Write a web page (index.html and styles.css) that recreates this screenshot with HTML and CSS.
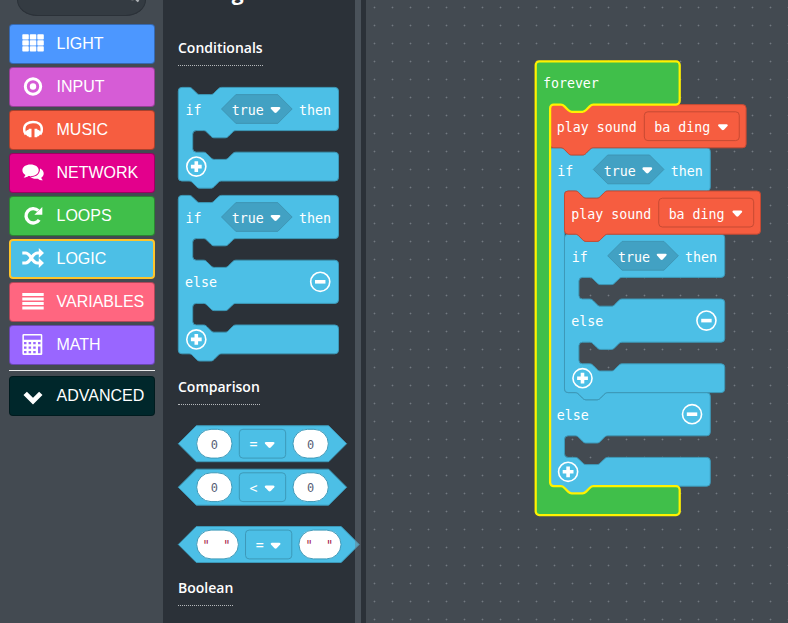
FILE: index.html
```html
<!DOCTYPE html>
<html lang="en">
<head>
<meta charset="utf-8">
<title>Block editor</title>
<link rel="stylesheet" href="styles.css">
</head>
<body>
<svg class="defs" width="0" height="0" aria-hidden="true">
  <defs>
    <path id="caret" d="M1.2 0H9.8Q11.8 .4 10.6 2L6.7 6.3Q5.5 7.4 4.3 6.3L.4 2Q-.8 .4 1.2 0Z"/>
    <g id="plus"><circle r="10.6" fill="none" stroke="#fff" stroke-width="1.8"/><path d="M-6 0H6M0-6V6" stroke="#fff" stroke-width="4"/></g>
    <g id="minus"><circle r="10.6" fill="none" stroke="#fff" stroke-width="1.8"/><path d="M-5.8 0H5.8" stroke="#fff" stroke-width="4"/></g>
    <g id="cond">
      <text x="8" y="31" textLength="17.800" lengthAdjust="spacingAndGlyphs">if</text>
      <path class="hex" d="M48 24L64 8H110.500L126.500 24L110.500 40H64Z"/>
      <text x="59.500" y="31" textLength="35.600" lengthAdjust="spacingAndGlyphs">true</text>
      <use href="#caret" x="102.500" y="21.700" fill="#fff"/>
      <text x="134" y="31" textLength="35.600" lengthAdjust="spacingAndGlyphs">then</text>
    </g>
    <g id="play">
      <path class="music" d="M0 4a4 4 0 0 1 4-4H12c2 0 3 1 4 2l4 4c1 1 2 2 4 2h12c2 0 3-1 4-2l4-4c1-1 2-2 4-2H213.800a4 4 0 0 1 4 4V44a4 4 0 0 1-4 4H48c-2 0-3 1-4 2l-4 4c-1 1-2 2-4 2h-12c-2 0-3-1-4-2l-4-4c-1-1-2-2-4-2H4a4 4 0 0 1-4-4Z"/>
      <text x="7.500" y="31" textLength="88.900" lengthAdjust="spacingAndGlyphs">play sound</text>
      <rect class="music" x="104.700" y="8" width="105.500" height="32" rx="4"/>
      <text x="115.700" y="31" textLength="62.200" lengthAdjust="spacingAndGlyphs">ba ding</text>
      <use href="#caret" x="186.500" y="21.700" fill="#fff"/>
    </g>
    <g id="ifelse">
      <path class="logic" d="M0 4a4 4 0 0 1 4-4H12c2 0 3 1 4 2l4 4c1 1 2 2 4 2h12c2 0 3-1 4-2l4-4c1-1 2-2 4-2H174a4 4 0 0 1 4 4V44a4 4 0 0 1-4 4H64c-2 0-3 1-4 2l-4 4c-1 1-2 2-4 2h-12c-2 0-3-1-4-2l-4-4c-1-1-2-2-4-2h-8a4 4 0 0 0-4 4v16a4 4 0 0 0 4 4h8c2 0 3 1 4 2l4 4c1 1 2 2 4 2h12c2 0 3-1 4-2l4-4c1-1 2-2 4-2H174a4 4 0 0 1 4 4v40a4 4 0 0 1-4 4H64c-2 0-3 1-4 2l-4 4c-1 1-2 2-4 2h-12c-2 0-3-1-4-2l-4-4c-1-1-2-2-4-2h-8a4 4 0 0 0-4 4v16a4 4 0 0 0 4 4h8c2 0 3 1 4 2l4 4c1 1 2 2 4 2h12c2 0 3-1 4-2l4-4c1-1 2-2 4-2H174a4 4 0 0 1 4 4v24a4 4 0 0 1-4 4H48c-2 0-3 1-4 2l-4 4c-1 1-2 2-4 2h-12c-2 0-3-1-4-2l-4-4c-1-1-2-2-4-2H4a4 4 0 0 1-4-4Z"/>
      <use href="#cond"/>
      <text x="7.500" y="102" textLength="35.600" lengthAdjust="spacingAndGlyphs">else</text>
      <use href="#minus" x="157.700" y="96"/>
      <use href="#plus" x="20" y="160"/>
    </g>
    <g id="compare">
      <path class="logic" d="M0 20L20 0H167L187 20L167 40H20Z"/>
      <rect class="value" x="20.400" y="4" width="39.300" height="32" rx="16"/>
      <rect class="logic" x="67.800" y="4" width="51.500" height="32" rx="4"/>
      <rect class="value" x="127.400" y="4" width="39.300" height="32" rx="16"/>
      <text class="number" x="36" y="25.500" textLength="8" lengthAdjust="spacingAndGlyphs">0</text>
      <use href="#caret" x="96" y="18" fill="#fff"/>
      <text class="number" x="143" y="25.500" textLength="8" lengthAdjust="spacingAndGlyphs">0</text>
    </g>
  </defs>
</svg>
<div class="editor">
  <nav class="toolbox">
    <div class="search"><svg width="12" height="12" viewBox="0 0 12 12"><circle cx="4.500" cy="4.500" r="3.500"/><path d="M6.500 6.500L10.500 10.500"/></svg></div>
    <div class="categories">
      <div class="category light"><svg viewBox="0 0 24 24"><path d="M2.100 4.100h4.900v3.600H2.100zM9.600 4.100h4.900v3.600h-4.900zM17.100 4.100h4.900v3.600h-4.900zM2.100 10.100h4.900v3.600H2.100zM9.600 10.100h4.900v3.600h-4.900zM17.100 10.100h4.900v3.600h-4.900zM2.100 16.100h4.900v3.600H2.100zM9.600 16.100h4.900v3.600h-4.900zM17.100 16.100h4.900v3.600h-4.900z" fill="#fff" stroke="#fff" stroke-width="1.600" stroke-linejoin="round"/></svg><span>LIGHT</span></div>
      <div class="category input"><svg viewBox="0 0 24 24"><circle cx="12" cy="12.500" r="7.700" fill="none" stroke="#fff" stroke-width="3"/><circle cx="12" cy="12.500" r="3.200" fill="#fff"/></svg><span>INPUT</span></div>
      <div class="category music-cat"><svg viewBox="0 0 24 24"><path d="M4.800 17.500Q2.900 15 3.200 12C3.200 7.400 7.200 4.900 12 4.900s8.800 2.500 8.800 7.100Q21.100 15 19.200 17.500" fill="none" stroke="#fff" stroke-width="2.500"/><path d="M4.500 15.500q.3-2.500 3.300-3v-.8h2.700v8.600H7.800v-.8q-3-.3-3.300-4zM19.500 15.500q-.3-2.500-3.300-3v-.8h-2.700v8.600h2.700v-.8q3-.3 3.300-4z" fill="#fff"/></svg><span>MUSIC</span></div>
      <div class="category network"><svg viewBox="0 0 24 24"><path d="M9.500 4.500C4.900 4.500 1.400 6.900 1.400 10.300c0 2 1.200 3.700 3 4.700-.2 1-1 1.800-1.800 2.500 1.900.1 3.600-.5 4.800-1.500 5.600.8 10.300-1.600 10.300-5.700C17.700 6.900 14.100 4.500 9.500 4.500Z" fill="#fff"/><path d="M19 8.500c2.500 1.200 3.900 3 3.700 5.200-.1 1.700-1 3-2.500 4 .3 1.100 1 1.800 1.700 2.600-2 .1-3.700-.4-4.900-1.600-3.300.5-6.200-.3-8-1.900C14.500 17.500 19.300 14.500 19 8.500Z" fill="#fff"/></svg><span>NETWORK</span></div>
      <div class="category loops"><svg viewBox="0 0 24 24"><path d="M17.300 7.700A7.200 7.200 0 1 0 18.200 16.800" fill="none" stroke="#fff" stroke-width="3.300"/><path d="M21.300 4v7.700h-8z" fill="#fff"/></svg><span>LOOPS</span></div>
      <div class="category logic-cat selected"><svg viewBox="0 0 24 24"><path d="M1.300 7H4.500C10 7 10.500 17 16.500 17H19M1.300 17H4.500C10 17 10.500 7 16.500 7H19" fill="none" stroke="#fff" stroke-width="3.200"/><path d="M17.800 2L23 7L17.800 12ZM17.800 12L23 17L17.800 22Z" fill="#fff"/></svg><span>LOGIC</span></div>
      <div class="category variables"><svg viewBox="0 0 24 24"><path d="M1.300 5.500H22.700M1.300 10H22.700M1.300 14.500H22.700M1.300 19H22.700" stroke="#fff" stroke-width="2.900"/></svg><span>VARIABLES</span></div>
      <div class="category math"><svg viewBox="0 0 24 24"><path fill="#fff" fill-rule="evenodd" d="M2.800 2H20Q21.300 2 21.300 3.300V21.700Q21.300 23 20 23H2.800Q1.400 23 1.400 21.700V3.300Q1.400 2 2.800 2ZM2.900 3.500V7.800H19.800V3.500ZM3 10v2.200h2.500V10zM7.600 10v2.200h2.500V10zM12.200 10v2.200h2.500V10zM17 10v2.200h2.500V10zM3 14.500v2.200h2.500v-2.200zM7.600 14.500v2.200h2.500v-2.200zM12.200 14.500v2.200h2.500v-2.200zM17 14.500v6.700h2.500v-6.700zM3 19v2.200h2.500V19zM7.600 19v2.200h2.500V19zM12.200 19v2.200h2.500V19z"/></svg><span>MATH</span></div>
    </div>
    <div class="divider"></div>
    <div class="category advanced"><svg viewBox="0 0 24 24"><path d="M4.200 9.400L12 17.200L19.800 9.400" fill="none" stroke="#fff" stroke-width="4.800"/></svg><span>ADVANCED</span></div>
  </nav>
  <section class="flyout">
    <h2>Logic</h2>
    <h3>Conditionals</h3>
    <svg class="block if-block" width="162" height="108"><g transform="translate(.3 .4) scale(.9)">
      <path class="logic" d="M0 4a4 4 0 0 1 4-4H12c2 0 3 1 4 2l4 4c1 1 2 2 4 2h12c2 0 3-1 4-2l4-4c1-1 2-2 4-2H174a4 4 0 0 1 4 4V44a4 4 0 0 1-4 4H64c-2 0-3 1-4 2l-4 4c-1 1-2 2-4 2h-12c-2 0-3-1-4-2l-4-4c-1-1-2-2-4-2h-8a4 4 0 0 0-4 4v16a4 4 0 0 0 4 4h8c2 0 3 1 4 2l4 4c1 1 2 2 4 2h12c2 0 3-1 4-2l4-4c1-1 2-2 4-2H174a4 4 0 0 1 4 4v24a4 4 0 0 1-4 4H48c-2 0-3 1-4 2l-4 4c-1 1-2 2-4 2h-12c-2 0-3-1-4-2l-4-4c-1-1-2-2-4-2H4a4 4 0 0 1-4-4Z"/>
      <use href="#cond"/><use href="#plus" x="20" y="88"/>
    </g></svg>
    <svg class="block" width="162" height="182"><g transform="translate(.3 .4) scale(.9)"><use href="#ifelse"/></g></svg>
    <h3>Comparison</h3>
    <svg class="block compare-block" width="170" height="44"><g transform="translate(.3 .7) scale(.9)"><use href="#compare"/><text x="79" y="26" textLength="8.900" lengthAdjust="spacingAndGlyphs">=</text></g></svg>
    <svg class="block" width="170" height="57"><g transform="translate(.3 .2) scale(.9)"><use href="#compare"/><text x="79" y="26" textLength="8.900" lengthAdjust="spacingAndGlyphs">&lt;</text></g></svg>
    <svg class="block" width="182" height="52"><g transform="translate(.3 .5) scale(.9)">
      <path class="logic" d="M0 20L20 0H181L201 20L181 40H20Z"/>
      <rect class="value" x="20.400" y="4" width="46.400" height="32" rx="16"/>
      <rect class="logic" x="74.700" y="4" width="51.400" height="32" rx="4"/>
      <rect class="value" x="134" y="4" width="46.800" height="32" rx="16"/>
      <text class="quote" x="27" y="26" textLength="8" lengthAdjust="spacingAndGlyphs">"</text><text class="quote" x="50" y="26" textLength="8" lengthAdjust="spacingAndGlyphs">"</text>
      <text x="86" y="26" textLength="8.900" lengthAdjust="spacingAndGlyphs">=</text><use href="#caret" x="102.600" y="18" fill="#fff"/>
      <text class="quote" x="141.300" y="26" textLength="8" lengthAdjust="spacingAndGlyphs">"</text><text class="quote" x="164" y="26" textLength="8" lengthAdjust="spacingAndGlyphs">"</text>
    </g></svg>
    <h3>Boolean</h3>
    <div class="scrollbar"></div>
  </section>
  <main class="workspace">
    <svg width="422" height="623">
      <defs><pattern id="dots" x="-1" y="-2" width="18" height="18" patternUnits="userSpaceOnUse"><path d="M8 9.500h3M9.500 8v3" stroke="#6a7177" stroke-opacity=".4"/><rect x="9" y="9" width="1" height="1" fill="#737a80"/></pattern></defs>
      <rect width="422" height="623" fill="url(#dots)"/>
      <g transform="translate(169.700 61.400) scale(.9)">
        <path fill="#40bf4a" d="M0 4a4 4 0 0 1 4-4H156a4 4 0 0 1 4 4V44a4 4 0 0 1-4 4H64c-2 0-3 1-4 2l-4 4c-1 1-2 2-4 2h-12c-2 0-3-1-4-2l-4-4c-1-1-2-2-4-2h-8a4 4 0 0 0-4 4V468a4 4 0 0 0 4 4h8c2 0 3 1 4 2l4 4c1 1 2 2 4 2h12c2 0 3-1 4-2l4-4c1-1 2-2 4-2H156a4 4 0 0 1 4 4v24a4 4 0 0 1-4 4H4a4 4 0 0 1-4-4Z"/>
        <g transform="translate(16 96)">
          <path class="logic" d="M0 4a4 4 0 0 1 4-4H12c2 0 3 1 4 2l4 4c1 1 2 2 4 2h12c2 0 3-1 4-2l4-4c1-1 2-2 4-2H174a4 4 0 0 1 4 4V44a4 4 0 0 1-4 4H64c-2 0-3 1-4 2l-4 4c-1 1-2 2-4 2h-12c-2 0-3-1-4-2l-4-4c-1-1-2-2-4-2h-8a4 4 0 0 0-4 4V268a4 4 0 0 0 4 4h8c2 0 3 1 4 2l4 4c1 1 2 2 4 2h12c2 0 3-1 4-2l4-4c1-1 2-2 4-2H174a4 4 0 0 1 4 4v40a4 4 0 0 1-4 4H64c-2 0-3 1-4 2l-4 4c-1 1-2 2-4 2h-12c-2 0-3-1-4-2l-4-4c-1-1-2-2-4-2h-8a4 4 0 0 0-4 4v16a4 4 0 0 0 4 4h8c2 0 3 1 4 2l4 4c1 1 2 2 4 2h12c2 0 3-1 4-2l4-4c1-1 2-2 4-2H174a4 4 0 0 1 4 4v24a4 4 0 0 1-4 4H48c-2 0-3 1-4 2l-4 4c-1 1-2 2-4 2h-12c-2 0-3-1-4-2l-4-4c-1-1-2-2-4-2H4a4 4 0 0 1-4-4Z"/>
          <use href="#cond"/>
          <text x="7.500" y="302" textLength="35.600" lengthAdjust="spacingAndGlyphs">else</text>
          <use href="#minus" x="157.700" y="296"/><use href="#plus" x="20" y="360"/>
          <use href="#ifelse" x="16" y="96"/>
          <use href="#play" x="16" y="48"/>
        </g>
        <use href="#play" x="16" y="48"/>
        <path class="outline" d="M0 4a4 4 0 0 1 4-4H156a4 4 0 0 1 4 4V44a4 4 0 0 1-4 4H64c-2 0-3 1-4 2l-4 4c-1 1-2 2-4 2h-12c-2 0-3-1-4-2l-4-4c-1-1-2-2-4-2h-8a4 4 0 0 0-4 4V468a4 4 0 0 0 4 4h8c2 0 3 1 4 2l4 4c1 1 2 2 4 2h12c2 0 3-1 4-2l4-4c1-1 2-2 4-2H156a4 4 0 0 1 4 4v24a4 4 0 0 1-4 4H4a4 4 0 0 1-4-4Z"/>
        <text x="8" y="29.500" textLength="62.200" lengthAdjust="spacingAndGlyphs">forever</text>
      </g>
    </svg>
  </main>
</div>
</body>
</html>
```

FILE: styles.css
```css
* { box-sizing: border-box; }
body { margin: 0; overflow: hidden; background: #434a51; }
svg { display: block; flex: none; }
.defs { position: absolute; }
.editor { display: flex; width: 788px; height: 623px; overflow: hidden; }

.toolbox { width: 163px; flex: none; padding: 0 8px 0 9px; background: #434a51; }
.search {
  width: 129px; height: 16px; margin-left: 8px; padding-left: 110px;
  background: #343b42; border: 1px solid #2b3138; border-top: 0;
  border-radius: 0 0 20px 20px / 0 0 16px 16px; overflow: hidden;
}
.search svg { margin-top: -9px; fill: none; stroke: #aeb2b6; stroke-width: 2.4; }
.categories { display: flex; flex-direction: column; gap: 3px; margin-top: 8px; }
.category {
  display: flex; align-items: center; width: 146px; height: 40px; padding-left: 11px;
  border: 1px solid rgba(0, 0, 0, .3); border-radius: 4px; color: #fff;
  font: 16px/20px "Liberation Sans", Arial, sans-serif;
}
.category svg { width: 24px; height: 24px; margin: 0 11.5px 2px 0; }
.light { background: #4c97ff; }
.input { background: #d65cd6; }
.music-cat { background: #f65d40; }
.network { background: #e3008c; }
.loops { background: #40bf4a; }
.logic-cat { background: #4cbfe6; }
.variables { background: #ff6680; }
.math { background: #9966ff; }
.advanced { background: #00272b; }
.advanced svg { margin-bottom: 0; }
.selected { border: 2px solid #ffc52b; padding-left: 10px; }
.divider { width: 146px; height: 1px; margin: 5px 0; background: #e9eaeb; }

.flyout {
  position: relative; z-index: 1; width: 203px; flex: none; padding-left: 15px;
  background: #2b3138; display: flex; flex-direction: column; align-items: flex-start;
}
.flyout h2 {
  margin: -22px 0 31px; padding-left: 29px; color: #fff;
  font: 700 21px/29px "Open Sans", sans-serif;
}
.flyout h3 {
  margin: 0; height: 28px; flex: none; color: #fff; border-bottom: 1px dotted #b5b8bb;
  font: 600 14px/20px "Open Sans", sans-serif;
}
.block { overflow: visible; }
.if-block { margin-top: 21px; }
.compare-block { margin-top: 20px; }
.scrollbar { position: absolute; top: 0; right: 5px; width: 6px; height: 623px; background: rgba(114, 124, 134, .45); }

text {
  fill: #fff; white-space: pre;
  font: 16.6px "DejaVu Sans Mono", monospace;
}
.number { fill: #575e75; font-size: 14.5px; }
.quote { fill: #a31545; font-size: 15px; }
.logic { fill: #4cbfe6; stroke: #3d99b8; stroke-width: 1.1; }
.music { fill: #f65d40; stroke: #c54a33; stroke-width: 1.1; }
.value { fill: #fff; stroke: #3d99b8; stroke-width: 1.1; }
.hex { fill: #42a1c3; stroke: #3d93b1; stroke-width: 1; }
.outline { fill: none; stroke: #fff200; stroke-width: 2.5; }

.workspace { width: 422px; flex: none; background: #434a51; }
```
